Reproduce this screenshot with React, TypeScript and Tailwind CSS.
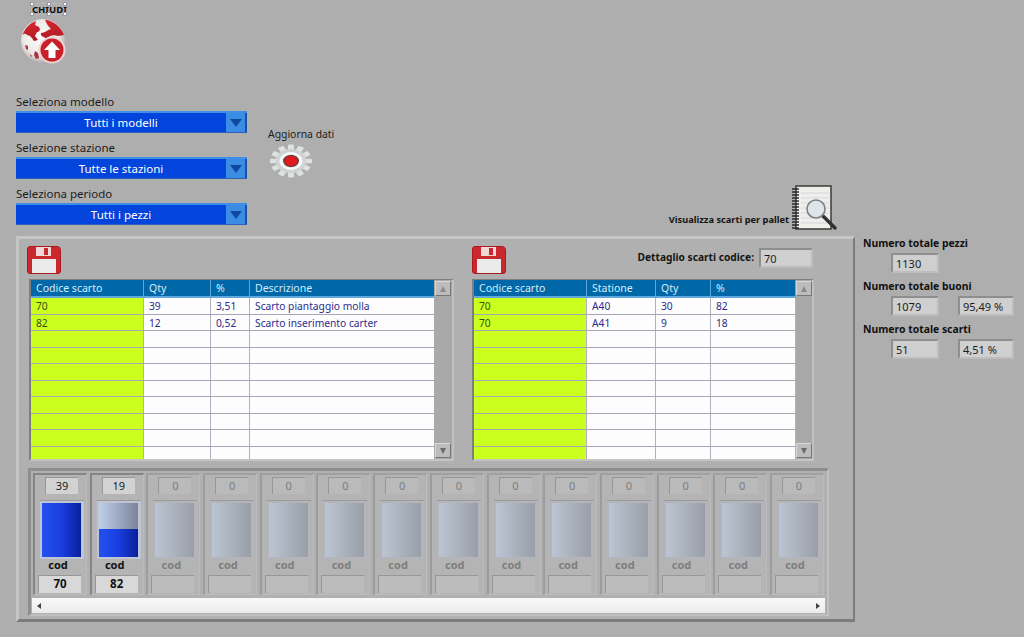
import React from "react";

const FONT = "font-['Noto_Sans','Open_Sans',sans-serif]";

function Globe() {
  return (
    <svg width="46" height="46" viewBox="0 0 46 46" className="block">
      <defs>
        <radialGradient id="gl" cx="45%" cy="42%" r="62%">
          <stop offset="0%" stopColor="#ffffff" />
          <stop offset="65%" stopColor="#ece8e6" />
          <stop offset="100%" stopColor="#a89e9c" />
        </radialGradient>
        <linearGradient id="rd" x1="0" y1="0" x2="0" y2="1">
          <stop offset="0%" stopColor="#d8262e" />
          <stop offset="100%" stopColor="#b01c24" />
        </linearGradient>
      </defs>
      <circle cx="23" cy="23" r="22" fill="url(#gl)" />
      <path d="M2.5 17 C5 10 10 5 16 3 L15 7 L19 9 C21 12 19 14 17 14 L15 18 L18 22 L14 23 C12 20 10 17 7 17 C5 15 4 16 2.5 17 Z" fill="url(#rd)" />
      <path d="M25 1.5 C34 3 41 9 44 17 L38 18 C33 16 29 18 26 21 C24 18 20 19 21 15 C25 15 27 12 31 11 C28 8 26 5 25 1.5 Z" fill="url(#rd)" />
      <path d="M5 27 L8 28 L8 32 L6 31 Z M15 33 L18 35 L19 40 L16 41 L14 37 Z M10 36 L12 38 L11 39 Z" fill="#a8343a" />
      <circle cx="32" cy="32" r="13.5" fill="#ecd4d4" />
      <circle cx="32" cy="32" r="11.5" fill="#c81f28" />
      <path d="M32 23.5 L40 32 L35.5 32 L35.5 40 L28.5 40 L28.5 32 L24 32 Z" fill="#ffffff" />
    </svg>
  );
}

function Gear() {
  const teeth = Array.from({ length: 12 }, (_, i) => (i * 360) / 12);
  return (
    <svg width="44" height="34" viewBox="-22 -17 44 34" className="block blur-[0.6px]">
      <g transform="scale(1 0.78)">
        {teeth.map((a) => (
          <rect key={a} x="-3" y="-21" width="6" height="9" rx="1" fill="#dfe2e2" transform={`rotate(${a})`} />
        ))}
        <circle r="15.5" fill="#cfd3d3" />
        <circle r="11.5" fill="#f8fafa" />
        <circle r="8" fill="#6a4444" />
        <circle r="6.5" fill="#e01a1e" />
      </g>
    </svg>
  );
}

function Save() {
  return (
    <svg width="34" height="28" viewBox="0 0 34 28" className="block">
      <path d="M3 0.5 H30 Q33.5 0.5 33.5 4 V25 Q33.5 27.5 31 27.5 H3 Q0.5 27.5 0.5 25 V3 Q0.5 0.5 3 0.5 Z" fill="#c9292e" stroke="#a81c20" />
      <rect x="9" y="1" width="15" height="9" fill="#f0d8d8" />
      <rect x="17" y="2" width="4" height="7" fill="#c9292e" />
      <rect x="5" y="13" width="24" height="14" fill="#ebebeb" />
    </svg>
  );
}

function Notebook() {
  const rings = Array.from({ length: 14 }, (_, i) => 4 + i * 3);
  return (
    <svg width="46" height="45" viewBox="0 0 46 45" className="block">
      <rect x="5" y="1" width="35" height="43" fill="#efeeea" stroke="#3a3a3a" strokeWidth="1.5" />
      {[8, 13, 18, 23, 28, 33, 38].map((y) => (
        <line key={y} x1="10" x2="38" y1={y} y2={y} stroke="#d2d6dc" />
      ))}
      {rings.map((y) => (
        <line key={y} x1="1" x2="8" y1={y} y2={y} stroke="#222" strokeWidth="1.4" />
      ))}
      <line x1="32" y1="31" x2="44" y2="43" stroke="#303030" strokeWidth="3.4" strokeLinecap="round" />
      <circle cx="25" cy="24" r="9" fill="#dfe6ea" stroke="#7a7f84" strokeWidth="1.6" />
    </svg>
  );
}

function Dropdown({ text }: { text: string }) {
  return (
    <div className="flex w-[231px] h-[22px] border-t-2 border-b border-[#3f8fe6] border-b-[#2a62b8] bg-[#0345dc]">
      <div className="flex-1 text-center text-white text-[11.5px] leading-[20px]">{text}</div>
      <div className="w-[21px] bg-[#3b8ce4] border-r-2 border-[#1a50a8] flex items-center justify-center">
        <div className="w-0 h-0 border-l-[6px] border-r-[6px] border-t-[8px] border-l-transparent border-r-transparent border-t-[#10479f]" />
      </div>
    </div>
  );
}

function Field({ label, text }: { label: string; text: string }) {
  return (
    <div className="h-[46px]">
      <div className="h-[17px] text-[11.5px] leading-[15px] text-[#1c1c1c]">{label}</div>
      <Dropdown text={text} />
    </div>
  );
}

function ValueBox({ v, w }: { v: string; w: string }) {
  return (
    <div className={`${w} h-[20px] bg-[#cfcfcf] border-t-2 border-l-2 border-[#8e8e8e] border-b-2 border-r-2 border-b-[#bdbdbd] border-r-[#bdbdbd] pl-[3px] text-[11px] leading-[17px] text-[#1d1d1d]`}>
      {v}
    </div>
  );
}

function ScrollBtn({ up }: { up?: boolean }) {
  return (
    <div className="w-[16px] h-[15px] mx-auto shrink-0 bg-[#bcbcbc] border border-t-[#d8d8d8] border-l-[#d8d8d8] border-b-[#777] border-r-[#777] flex items-center justify-center">
      <div className={`w-0 h-0 border-l-[3px] border-r-[3px] border-l-transparent border-r-transparent ${up ? "border-b-[6px] border-b-[#8a8a8a]" : "border-t-[6px] border-t-[#6a6a6a]"}`} />
    </div>
  );
}

function Table({ w, sw, cols, head, rows }: { w: string; sw: string; cols: number[]; head: string[]; rows: string[][] }) {
  const blanks = Array.from({ length: 10 }, (_, i) => rows[i] ?? head.map(() => ""));
  return (
    <div className={`${w} h-[182px] flex border-t border-l-2 border-[#7e7e7e] border-r-2 border-b-2 border-r-[#c0c0c0] border-b-[#c4c4c4] overflow-hidden`}>
      <div className="flex-1 overflow-hidden">
        <div className="flex h-[18px] bg-[#0068a8] border-b-2 border-[#5fa8dc]">
          {head.map((h, i) => (
            <div key={h} style={{ width: cols[i] }} className="pl-[5px] shrink-0 text-[10.5px] leading-[16px] text-[#d6ecfb] border-r border-[#5fa8dc]">
              {h}
            </div>
          ))}
        </div>
        {blanks.map((r, ri) => (
          <div key={ri} className="flex h-[16.5px] border-b border-[#a6a6b6]">
            {r.map((c, i) => (
              <div
                key={i}
                style={{ width: cols[i] }}
                className={`shrink-0 pl-[5px] text-[10.25px] leading-[16px] border-r border-[#b0b0be] ${i === 0 ? "bg-[#cbff1e] text-[#34501a]" : "bg-[#fdfdfd] text-[#2c2c8c]"}`}
              >
                {c}
              </div>
            ))}
          </div>
        ))}
      </div>
      <div className={`${sw} bg-[#a9a9a9] flex flex-col justify-between py-px`}>
        <ScrollBtn up />
        <ScrollBtn />
      </div>
    </div>
  );
}

function Cell({ top, code, fill, active }: { top: string; code: string; fill: number; active: boolean }) {
  return (
    <div className={`w-[54px] h-[122px] mr-[2.7px] shrink-0 flex flex-col items-start bg-[#b4b4b4] border-l-2 border-t-2 border-r border-b border-r-[#bcbcbc] border-b-[#bcbcbc] ${active ? "border-l-[#858585] border-t-[#858585]" : "border-l-[#9c9c9c] border-t-[#a0a0a0]"}`}>
      <div className={`ml-[10px] w-[33px] h-[17px] mt-[2px] text-center text-[11px] leading-[15px] border-t border-l border-[#979797] ${active ? "bg-[#d2d2d2] text-[#222]" : "bg-[#bababa] text-[#7c7c7c]"}`}>
        {top}
      </div>
      <div className={`ml-[5px] w-[44px] h-[59px] mt-[6px] pl-[2px] pr-[3px] py-[2px] border-t border-[#9a9a9a] ${active ? "bg-[#bdc5d6]" : "bg-[#b3b5ba]"}`}>
        <div className={`h-full flex flex-col bg-gradient-to-r ${active ? "from-[#c0cfea] to-[#7b8599]" : "from-[#bcc5d4] via-[#aab2bc] to-[#9a9ea9]"}`}>
          <div className="flex-1" />
          <div style={{ height: `${fill}%` }} className="bg-gradient-to-r from-[#2450f0] via-[#1a3ee0] to-[#0a1f9a]" />
        </div>
      </div>
      <div className={`ml-[1px] w-[44px] text-center h-[13px] text-[11px] leading-[11px] font-bold ${active ? "text-[#111]" : "text-[#7e7e7e]"}`}>cod</div>
      <div className={`ml-[3px] w-[43px] h-[18px] mt-[3px] text-center text-[11.5px] leading-[16px] font-bold border-t border-l border-[#979797] ${active ? "bg-[#d8d8d8] text-[#111]" : "bg-[#bcbcbc]"}`}>
        {code}
      </div>
    </div>
  );
}

export default function App() {
  const cells = Array.from({ length: 14 }, (_, i) =>
    i === 0
      ? { top: "39", code: "70", fill: 100, active: true }
      : i === 1
      ? { top: "19", code: "82", fill: 51, active: true }
      : { top: "0", code: "", fill: 0, active: false }
  );
  const handles = ["-left-[2px] -top-[2px]", "left-[15px] -top-[2px]", "-right-[2px] -top-[2px]", "-left-[2px] -bottom-[2px]", "left-[15px] -bottom-[2px]", "-right-[2px] -bottom-[2px]"];

  return (
    <div className={`${FONT} w-[1024px] h-[637px] overflow-hidden bg-[#aeaeae]`}>
      {/* top zone */}
      <div className="h-[236px] flex flex-col">
        <div className="relative ml-[31px] mt-[3px] w-[35px] h-[12px] text-center text-[9.5px] leading-[12px] font-bold text-[#111] border border-dashed border-[#b8b8c8]">
          CHIUDI
          {handles.map((h) => (
            <span key={h} className={`absolute ${h} w-[4px] h-[4px] bg-white border border-[#9a9aaa]`} />
          ))}
        </div>
        <div className="ml-[20px] mt-[3px] h-[46px]">
          <Globe />
        </div>
        <div className="flex mt-[30px] pl-[16px]">
          <div className="flex flex-col">
            <Field label="Seleziona modello" text="Tutti i modelli" />
            <Field label="Selezione stazione" text="Tutte le stazioni" />
            <Field label="Seleziona periodo" text="Tutti i pezzi" />
          </div>
          <div className="ml-[21px] mt-[33px]">
            <div className="text-[10.4px] leading-[15px] text-[#1c1c1c] whitespace-nowrap">Aggiorna dati</div>
            <div className="ml-px mt-[2px]">
              <Gear />
            </div>
          </div>
          <div className="ml-auto mr-[187px] flex items-end self-start mt-[91px]">
            <div className="text-[9.25px] leading-[14px] font-bold text-[#151515] whitespace-nowrap mb-[3px] mr-[2px]">Visualizza scarti per pallet</div>
            <Notebook />
          </div>
        </div>
      </div>

      {/* main zone */}
      <div className="flex pl-[16px]">
        <div className="w-[839px] h-[386px] bg-[#b0b0b0] border-t-[3px] border-l-[3px] border-[#c6c6c6] border-r-[2px] border-b-[3px] border-r-[#7c7c7c] border-b-[#7c7c7c] pt-[7px] pl-[10px]">
          <div className="flex">
            <div className="w-[443px]">
              <div className="-ml-[2px]">
                <Save />
              </div>
              <div className="mt-[5px]">
                <Table
                  w="w-[425px]"
                  sw="w-[18px]"
                  cols={[113, 67, 39, 186]}
                  head={["Codice scarto", "Qty", "%", "Descrizione"]}
                  rows={[
                    ["70", "39", "3,51", "Scarto piantaggio molla"],
                    ["82", "12", "0,52", "Scarto inserimento carter"],
                  ]}
                />
              </div>
            </div>
            <div className="w-[342px]">
              <div className="flex h-[28px]">
                <Save />
                <div className="ml-auto flex items-start mr-[1px]">
                  <div className="text-[10.2px] leading-[16px] font-bold mt-[3px] mr-[5px] text-[#151515] whitespace-nowrap">Dettaglio scarti codice:</div>
                  <div className="mt-[2px]">
                    <ValueBox v="70" w="w-[54px]" />
                  </div>
                </div>
              </div>
              <div className="mt-[5px]">
                <Table
                  w="w-[342px]"
                  sw="w-[16px]"
                  cols={[113, 69, 55, 85]}
                  head={["Codice scarto", "Statione", "Qty", "%"]}
                  rows={[
                    ["70", "A40", "30", "82"],
                    ["70", "A41", "9", "18"],
                  ]}
                />
              </div>
            </div>
          </div>

          {/* strip of bars */}
          <div className="ml-[-1px] mt-[7px] w-[801px] h-[148px] border-t-[3px] border-l-[3px] border-[#8e8e8e] border-r-2 border-b-2 border-r-[#c0c0c0] border-b-[#c0c0c0] pl-[1px] pt-[2px]">
            <div className="flex overflow-hidden ml-[1px] w-[792px]">
              {cells.map((c, i) => (
                <Cell key={i} {...c} />
              ))}
            </div>
            <div className="mt-[3px] w-[793px] h-[15px] bg-gradient-to-b from-[#f8f8f8] to-[#ececec] flex items-center justify-between px-[5px]">
              <div className="w-0 h-0 border-y-[3px] border-r-[4px] border-y-transparent border-r-[#444]" />
              <div className="w-0 h-0 border-y-[3px] border-l-[4px] border-y-transparent border-l-[#444]" />
            </div>
          </div>
        </div>

        {/* totals */}
        <div className="ml-[8px] w-[152px] text-[#111]">
          <div className="text-[10.4px] leading-[14px] font-bold">Numero totale pezzi</div>
          <div className="flex mt-[3px] ml-[28px]">
            <ValueBox v="1130" w="w-[48px]" />
          </div>
          <div className="text-[10.4px] leading-[14px] font-bold mt-[6px]">Numero totale buoni</div>
          <div className="flex mt-[3px] ml-[28px] gap-[19px]">
            <ValueBox v="1079" w="w-[48px]" />
            <ValueBox v="95,49 %" w="w-[56px]" />
          </div>
          <div className="text-[10.4px] leading-[14px] font-bold mt-[6px]">Numero totale scarti</div>
          <div className="flex mt-[3px] ml-[28px] gap-[19px]">
            <ValueBox v="51" w="w-[48px]" />
            <ValueBox v="4,51 %" w="w-[56px]" />
          </div>
        </div>
      </div>
    </div>
  );
}
